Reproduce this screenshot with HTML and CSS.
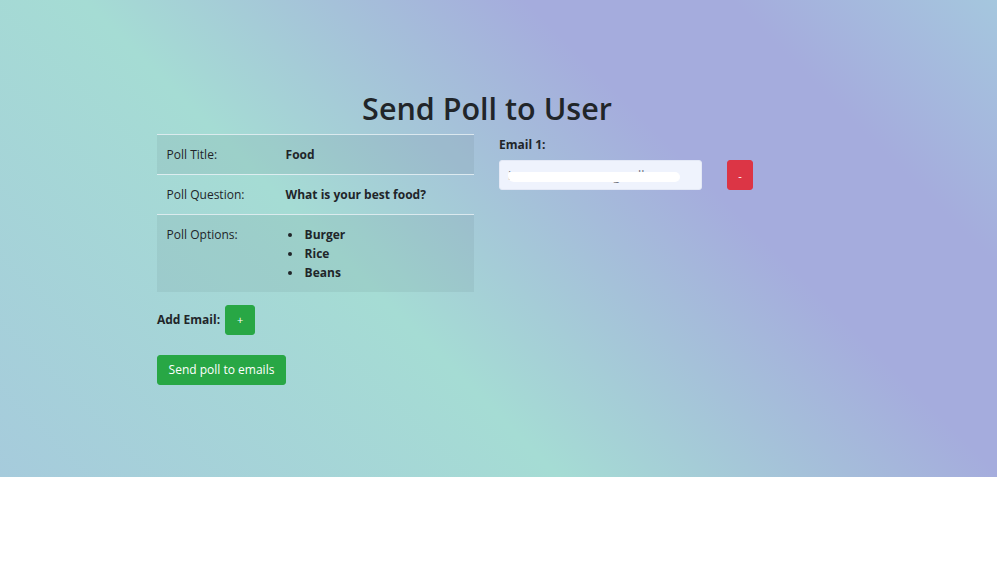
FILE: index.html
```html
<!DOCTYPE html>
<html lang="en">
<head>
<meta charset="utf-8">
<title>Send Poll to User</title>
<link rel="stylesheet" href="styles.css">
</head>
<body>
<div class="page">
  <div class="container">
    <h1 class="title">Send Poll to User</h1>
    <div class="row">
      <div class="col-left">
        <table class="poll-table">
          <tbody>
            <tr class="striped">
              <td class="key">Poll Title:</td>
              <td class="val">Food</td>
            </tr>
            <tr>
              <td class="key">Poll Question:</td>
              <td class="val">What is your best food?</td>
            </tr>
            <tr class="striped">
              <td class="key">Poll Options:</td>
              <td class="val">
                <ul class="options">
                  <li>Burger</li>
                  <li>Rice</li>
                  <li>Beans</li>
                </ul>
              </td>
            </tr>
          </tbody>
        </table>
        <div class="add-email">
          <span class="add-label">Add Email:</span>
          <button class="btn btn-green btn-square">+</button>
        </div>
        <button class="btn btn-green btn-send">Send poll to emails</button>
      </div>
      <div class="col-right">
        <label class="email-label">Email 1:</label>
        <div class="email-row">
          <div class="email-input">
            <span class="peek peek-dot">i</span>
            <span class="peek peek-g">g</span>
            <span class="peek peek-l">ll</span>
            <span class="redact"></span>
          </div>
          <button class="btn btn-red btn-square">-</button>
        </div>
      </div>
    </div>
  </div>
</div>
</body>
</html>
```

FILE: styles.css
```css
* { box-sizing: border-box; }

html, body {
  margin: 0;
  padding: 0;
  background: #ffffff;
}

body {
  font-family: "Open Sans", "Noto Sans", sans-serif;
  font-size: 12px;
  line-height: 19.2px;
  color: #212529;
}

.page {
  height: 477px;
  background: linear-gradient(45deg, #a6cbdc 0%, #a5dcd4 38%, #a5acdd 68%, #a5acdd 82%, #a5c7de 100%);
  padding-top: 89px;
}

.container {
  width: 660px;
  margin-left: 157px;
}

.title {
  margin: 0 0 6.4px 0;
  font-size: 30.5px;
  font-weight: 600;
  line-height: 38.4px;
  text-align: center;
  color: #212529;
}

.row {
  display: flex;
  gap: 25px;
}

.col-left {
  width: 317px;
  display: flex;
  flex-direction: column;
  align-items: flex-start;
}

.poll-table {
  width: 317px;
  border-collapse: collapse;
  margin-bottom: 12.8px;
}

.poll-table td {
  padding: 10.2px 9.6px 9.6px 9.6px;
  border-top: 1px solid rgba(230, 240, 244, 0.85);
  vertical-align: top;
}

.poll-table .striped td {
  background: rgba(0, 0, 0, 0.05);
}

.key {
  width: 119px;
  font-weight: 400;
}

.val {
  font-weight: 700;
}

.options {
  margin: 0;
  padding-left: 19px;
  list-style: none;
}

.options li {
  position: relative;
}

.options li::before {
  content: "";
  position: absolute;
  left: -17px;
  top: 8px;
  width: 4px;
  height: 4px;
  border-radius: 50%;
  background: #212529;
}

.add-email {
  display: flex;
  align-items: center;
  gap: 5px;
}

.add-label {
  font-weight: 700;
}

.btn {
  font-family: inherit;
  font-size: 12px;
  line-height: 19.2px;
  color: #ffffff;
  border: 1px solid transparent;
  border-radius: 3px;
  cursor: pointer;
}

.btn-green {
  background: #28a745;
  border-color: #28a745;
}

.btn-red {
  background: #dc3545;
  border-color: #dc3545;
}

.btn-square {
  width: 30px;
  height: 30px;
  padding: 0;
  font-size: 11px;
}

.btn-red.btn-square {
  width: 26px;
}

.btn-send {
  margin-top: 20px;
  height: 30px;
  padding: 0 9.6px;
  width: 129px;
}

.col-right {
  display: flex;
  flex-direction: column;
  padding-top: 1px;
}

.email-label {
  font-weight: 700;
  margin-bottom: 6.4px;
}

.email-row {
  display: flex;
  align-items: center;
  gap: 25px;
}

.email-input {
  position: relative;
  width: 203px;
  height: 30px;
  background: #eff3fd;
  border: 1px solid #e4e9f6;
  border-radius: 3px;
}

.redact {
  position: absolute;
  left: 8px;
  top: 11px;
  width: 172px;
  height: 10px;
  background: #ffffff;
  border-radius: 2px 5px 5px 6px;
}

.peek {
  position: absolute;
  font-size: 12.8px;
  line-height: 13px;
  top: 7.5px;
  color: #6f747c;
}

.peek-dot {
  left: 8px;
}

.peek-g {
  left: 113px;
}

.peek-l {
  left: 138px;
}
```
